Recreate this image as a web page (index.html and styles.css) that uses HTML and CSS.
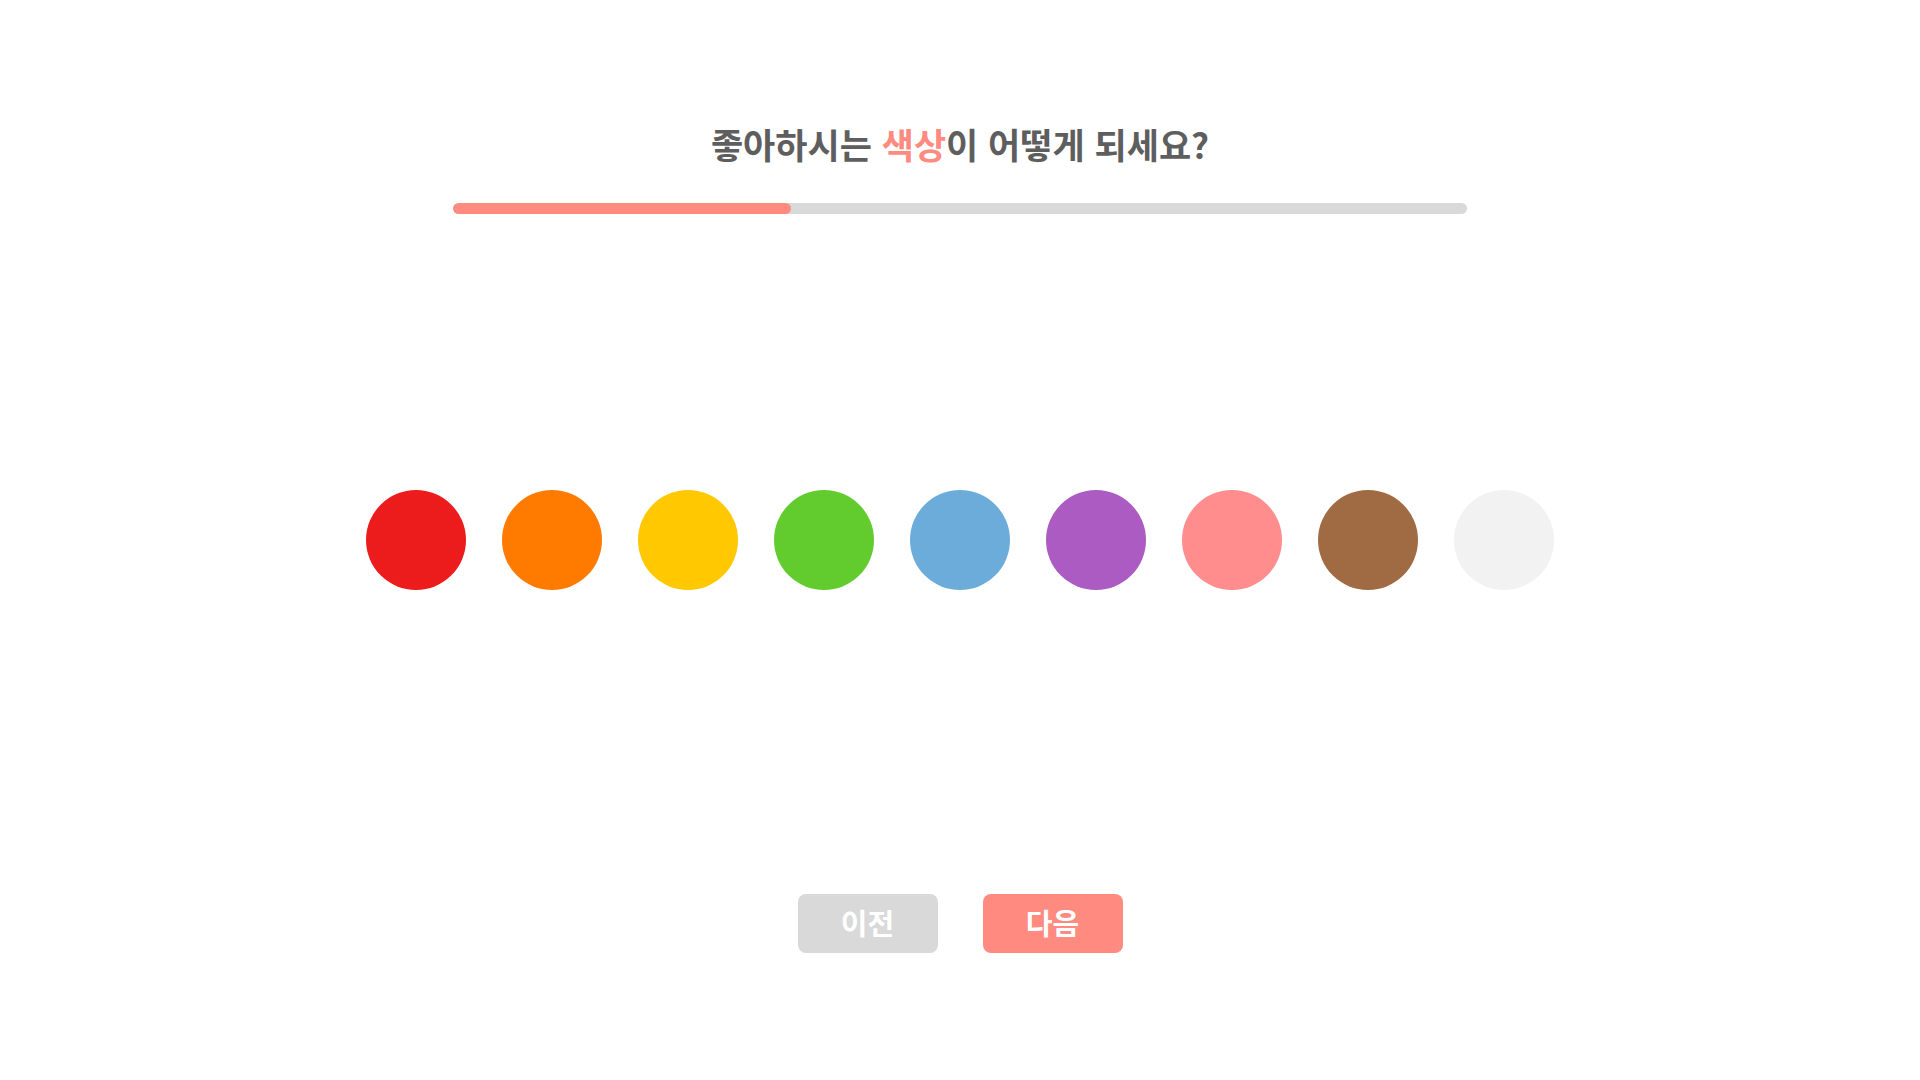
FILE: index.html
```html
<!DOCTYPE html>
<html lang="ko">
<head>
<meta charset="utf-8">
<title>색상 선택</title>
<link rel="stylesheet" href="styles.css">
</head>
<body>
<main class="page">
  <h1 class="title">좋아하시는 <span class="accent">색상</span>이 어떻게 되세요?</h1>
  <div class="progress"><div class="progress-fill" style="width: 33.33%"></div></div>
  <div class="swatches">
    <button class="swatch red" aria-label="빨강"></button>
    <button class="swatch orange" aria-label="주황"></button>
    <button class="swatch yellow" aria-label="노랑"></button>
    <button class="swatch green" aria-label="초록"></button>
    <button class="swatch blue" aria-label="파랑"></button>
    <button class="swatch purple" aria-label="보라"></button>
    <button class="swatch pink" aria-label="분홍"></button>
    <button class="swatch brown" aria-label="갈색"></button>
    <button class="swatch white" aria-label="흰색"></button>
  </div>
  <div class="actions">
    <button class="btn btn-prev">이전</button>
    <button class="btn btn-next">다음</button>
  </div>
</main>
</body>
</html>
```
FILE: styles.css
```css
* { box-sizing: border-box; }
html, body { margin: 0; padding: 0; background: #ffffff; }
body {
  font-family: "Noto Sans CJK KR", "Noto Sans", sans-serif;
  width: 1920px;
  height: 1080px;
}
.page {
  display: flex;
  flex-direction: column;
  align-items: center;
  padding-top: 121px;
}
.title {
  margin: 0;
  font-size: 35px;
  line-height: 46px;
  font-weight: 700;
  color: #5e5e5e;
  letter-spacing: 0;
}
.accent { color: #ff8a80; }
.progress {
  margin-top: 36px;
  width: 1014px;
  height: 11px;
  border-radius: 6px;
  background: #d9d9d9;
  overflow: hidden;
}
.progress-fill {
  height: 100%;
  background: #ff8a80;
  border-radius: 6px;
}
.swatches {
  margin-top: 276px;
  display: flex;
  gap: 36px;
}
.swatch {
  width: 100px;
  height: 100px;
  border-radius: 50%;
  border: none;
  padding: 0;
  cursor: pointer;
}
.red { background: #ed1c1c; }
.orange { background: #ff7b00; }
.yellow { background: #ffc800; }
.green { background: #62cc2f; }
.blue { background: #6cacda; }
.purple { background: #ab5bc1; }
.pink { background: #ff8d8d; }
.brown { background: #a06b43; }
.white { background: #f2f2f2; }
.actions {
  margin-top: 304px;
  display: flex;
  gap: 45px;
}
.btn {
  width: 140px;
  height: 59px;
  border: none;
  border-radius: 8px;
  padding: 0 0 4px;
  font-family: "Noto Sans CJK KR", "Noto Sans", sans-serif;
  font-size: 29px;
  font-weight: 700;
  color: #ffffff;
  cursor: pointer;
}
.btn-prev { background: #d9d9d9; }
.btn-next { background: #ff8a80; }
```
